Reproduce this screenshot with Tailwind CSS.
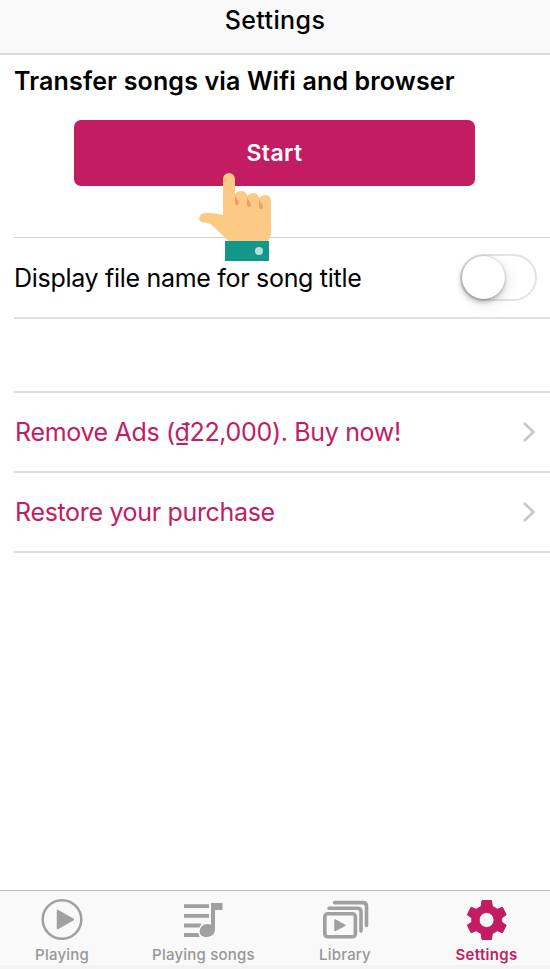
<!DOCTYPE html>
<html lang="en">
<head>
<meta charset="utf-8">
<title>Settings</title>
<script src="https://cdn.jsdelivr.net/npm/@tailwindcss/browser@4"></script>
</head>
<body class="bg-white">
<div class="flex h-[969px] w-[550px] flex-col overflow-hidden bg-white font-['Inter','Liberation_Sans',sans-serif] text-black">
  <header class="flex h-[55px] shrink-0 justify-center border-b-2 border-[#dadada] bg-[#f9f9f9]">
    <h1 class="h-10 text-[25px] leading-[41px] font-medium tracking-[0.38px]">Settings</h1>
  </header>
  <main class="flex flex-1 flex-col pl-[14px]">
    <section class="relative h-[183px] shrink-0 border-b border-[#cfcfd2]">
      <h2 class="pt-[6px] text-[25px] leading-10 font-semibold tracking-[0.15px] whitespace-nowrap">Transfer songs via Wifi and browser</h2>
      <button class="mt-[19px] ml-[60px] block h-[66px] w-[401px] rounded-[7px] bg-[#c31c62] text-[23px] font-semibold tracking-[0.4px] text-white">Start</button>
      <svg class="absolute top-[115px] left-[182px] z-10" width="80" height="94" viewBox="196 170 80 94">
        <path d="M223 215V179a6 6 0 0 1 12 0V194.500Q237 191 241 191Q246 191 247.300 196Q249.500 193 253.300 193Q258 193.500 259.300 198Q261.500 195 265.500 195Q271 195.500 271 201V232Q271 238 267.500 241.500H229L216.500 229.500C211 224 208 222.500 203.500 222.500Q199 221.500 199 218.500Q200 213.500 205 213Q214 212.500 223 215Z" fill="#fdca86"/>
        <path d="M235 195.500L238.800 202Q239.500 205 236.800 205Q235 205 235 202.500ZM247 197L250.800 204Q251.500 207 248.800 207Q247 207 247 204.500ZM259 199L262.800 206Q263.500 209 260.800 209Q259 209 259 206.500Z" fill="#ef9f62"/>
        <path d="M225 241h44v20H225z" fill="#13978a"/>
        <circle cx="259" cy="251" r="4" fill="#b5dfda"/>
      </svg>
    </section>
    <section class="flex h-[81px] shrink-0 items-center justify-between border-b-2 border-[#e0e0e1] pr-[13px]">
      <span class="text-[25px] leading-10 tracking-[-0.3px] whitespace-nowrap">Display file name for song title</span>
      <div class="flex h-[47px] w-[77px] items-center rounded-full border-[2px] border-[#e3e3e3]">
        <div class="size-[43px] rounded-full bg-white shadow-[-1px_3px_5px_rgba(0,0,0,0.25),0_0_2px_rgba(0,0,0,0.25),3px_5px_14px_rgba(0,0,0,0.1)]"></div>
      </div>
    </section>
    <section class="mt-[72px] flex flex-col border-t-2 border-[#e0e0e1] text-[25px] text-[#c31c62]">
      <div class="flex h-20 items-center justify-between border-b-2 border-[#e0e0e1] pr-[14px] pl-px">
        <span class="pt-px tracking-[-0.33px] whitespace-nowrap">Remove Ads (₫22,000). Buy now!</span>
        <svg width="14" height="22" viewBox="0 0 14 22" fill="none" stroke="#c6c6cb" stroke-width="2.600"><path d="M2 2L11.500 11L2 20"/></svg>
      </div>
      <div class="flex h-20 items-center justify-between border-b-2 border-[#e0e0e1] pr-[14px] pl-px">
        <span class="pt-px tracking-[-0.33px] whitespace-nowrap">Restore your purchase</span>
        <svg width="14" height="22" viewBox="0 0 14 22" fill="none" stroke="#c6c6cb" stroke-width="2.600"><path d="M2 2L11.500 11L2 20"/></svg>
      </div>
    </section>
  </main>
  <nav class="grid h-[79px] shrink-0 grid-cols-[124px_159px_124px_143px] border-t border-[#bebebe] bg-linear-to-b from-[#f9f9f9] from-[74px] to-[#f3f3f3] to-[74px] text-[15px] leading-5 font-medium text-[#979797]">
    <div class="flex flex-col items-center pt-[6px]">
      <svg width="44" height="44" viewBox="40 897 44 44"><circle cx="62" cy="919.500" r="19.300" fill="none" stroke="#a0a0a0" stroke-width="2.500"/><path d="M57.500 910.500L73.500 919.500L57.500 928.500Z" fill="#a0a0a0" stroke="#a0a0a0" stroke-width="1.500" stroke-linejoin="round"/></svg>
      <span class="mt-1 tracking-[0.2px]">Playing</span>
    </div>
    <div class="flex flex-col items-center pt-[6px]">
      <svg width="44" height="44" viewBox="182 897 44 44" fill="#a0a0a0"><path d="M184 904.300h25v3.800h-25zM184 914h25v3.800h-25zM184 923.600h17.500l-2 3.800H184zM184 933h14.500q0 2 1.200 3.900H184z"/><path d="M211 903h11.500v7H215v19.500C215 934 211.500 937 206.500 937C202 937 199.700 934.500 199.700 931.500C199.700 927 203.500 924 207.500 924Q209.500 924 211 924.800Z"/></svg>
      <span class="mt-1 tracking-[0.22px] whitespace-nowrap">Playing songs</span>
    </div>
    <div class="flex flex-col items-center pt-[6px]">
      <svg width="50" height="44" viewBox="320 897 50 44" fill="none" stroke="#a0a0a0" stroke-width="3.600" stroke-linecap="round"><rect x="324.800" y="913.800" width="30.600" height="23" rx="3"/><path d="M329 908.200H357.500Q361 908.200 361 911.700V931M334.500 902.600H363Q366.500 902.600 366.500 906.100V925.500"/><path d="M335 920L345 925.300L335 930.500Z" fill="#a0a0a0" stroke-width="1.500" stroke-linejoin="round"/></svg>
      <span class="mt-1 tracking-[0.2px]">Library</span>
    </div>
    <div class="flex flex-col items-center pt-[6px] pl-4 text-[#c31c62]">
      <svg width="44" height="44" viewBox="465 897 44 44"><path fill="#c31c62" stroke="#c31c62" stroke-linejoin="round" stroke-width="1" fill-rule="evenodd" d="M482 900.500H491.500L492.400 906.500Q495 907.500 497.300 909.300L502.400 907.200L506.200 914.800L501.600 918Q501.900 920 501.600 922L506.200 925.200L502.400 932.800L497.300 930.700Q495 932.500 492.400 933.500L491.500 939.500H482L481.100 933.500Q478.400 932.500 476.200 930.700L471.100 932.800L467.300 925.200L471.900 922Q471.600 920 471.900 918L467.300 914.800L471.100 907.200L476.200 909.300Q478.400 907.500 481.100 906.500ZM486.600 912.500a7.500 7.500 0 1 0 0 15a7.500 7.500 0 1 0 0-15Z"/></svg>
      <span class="mt-1 font-semibold tracking-[0.3px]">Settings</span>
    </div>
  </nav>
</div>
</body>
</html>
